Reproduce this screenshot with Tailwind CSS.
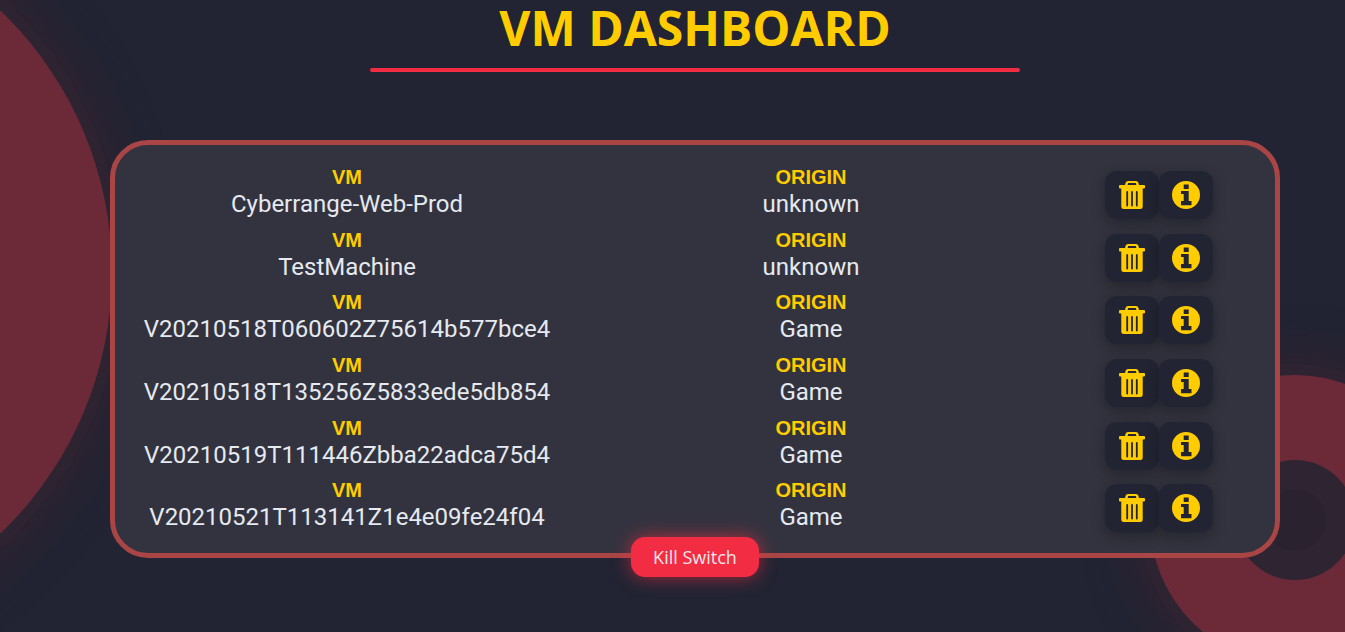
<!DOCTYPE html>
<html lang="en">
<head>
  <meta charset="UTF-8">
  <title>VM Dashboard</title>
  <script src="https://cdn.jsdelivr.net/npm/@tailwindcss/browser@4"></script>
</head>
<body class="relative h-screen overflow-hidden bg-[#222433] font-['Roboto',sans-serif]">

  <!-- icons -->
  <svg class="hidden">
    <symbol id="trash" viewBox="0 0 26 28">
      <path fill-rule="evenodd" d="M9 0h8a2.5 2.5 0 0 1 2.4 1.8L20 4h5a1 1 0 0 1 1 1v1.5a1 1 0 0 1-1 1h-1.3V25.500a2.500 2.500 0 0 1-2.500 2.500H4.800a2.500 2.500 0 0 1-2.500-2.500V7.500H1a1 1 0 0 1-1-1V5a1 1 0 0 1 1-1h5l.6-2.200A2.500 2.500 0 0 1 9 0zm.2 2l-.6 2h8.800l-.6-2zM7.300 11v13.500a.9.9 0 0 0 1.800 0V11a.9.9 0 0 0-1.800 0zm4.800 0v13.500a.9.9 0 0 0 1.800 0V11a.9.9 0 0 0-1.800 0zm4.800 0v13.500a.9.9 0 0 0 1.800 0V11a.9.9 0 0 0-1.800 0z"/>
    </symbol>
    <symbol id="info" viewBox="0 0 28 28">
      <path fill-rule="evenodd" d="M14 0a14 14 0 1 1 0 28a14 14 0 0 1 0-28zM11.700 3.500v4.500h5V3.500zM9 10v3h2.700v7H9v4.200h10.500V20h-2.800V10z"/>
    </symbol>
  </svg>

  <!-- background circles -->
  <div class="absolute left-[-612px] top-[-90px] h-[724px] w-[724px] rounded-full bg-[#6c2a38] shadow-[0_0_0_11px_#2e2431,0_0_40px_24px_#2e2230]"></div>
  <div class="absolute left-[1150px] top-[375px] flex h-[290px] w-[290px] items-center justify-center rounded-full bg-[#6c2a38] shadow-[0_0_0_11px_#2e2431,0_0_40px_24px_#2e2230]">
    <div class="flex h-[120px] w-[120px] items-center justify-center rounded-full bg-[#2e2432]">
      <div class="h-[62px] w-[62px] rounded-full bg-[#2b2230]"></div>
    </div>
  </div>

  <div class="relative flex flex-col items-center pl-[45px]">
    <h1 class="mt-[4px] font-['Open_Sans',sans-serif] text-[48px] leading-[48px] font-bold text-[#ffcc00]">VM DASHBOARD</h1>
    <div class="mt-[16px] h-[4px] w-[650px] rounded-full bg-[#f22c42]"></div>

    <div class="relative mt-[68px] w-[1170px] rounded-[38px] border-[5px] border-[#a94545] bg-[#33333f] pt-[19px] pb-[13px]">

      <div class="grid h-[62.7px] grid-cols-[2fr_2fr_1fr]">
        <div class="text-center"><p class="font-['Liberation_Sans',sans-serif] text-[20px] leading-[26px] font-bold text-[#ffcc00]">VM</p><p class="text-[24px] leading-[28px] text-[#e5e9f0]">Cyberrange-Web-Prod</p></div>
        <div class="text-center"><p class="font-['Liberation_Sans',sans-serif] text-[20px] leading-[26px] font-bold text-[#ffcc00]">ORIGIN</p><p class="text-[24px] leading-[28px] text-[#e5e9f0]">unknown</p></div>
        <div class="flex justify-center pt-[7px]">
          <button class="flex h-[48px] w-[54px] items-center justify-center rounded-[12px] bg-[#222433] shadow-[0_4px_14px_rgba(0,0,0,0.3)]"><svg class="h-[28px] w-[26px] fill-[#ffcc00]"><use href="#trash"/></svg></button>
          <button class="flex h-[48px] w-[54px] items-center justify-center rounded-[12px] bg-[#222433] shadow-[0_4px_14px_rgba(0,0,0,0.3)]"><svg class="h-[28px] w-[28px] fill-[#ffcc00]"><use href="#info"/></svg></button>
        </div>
      </div>

      <div class="grid h-[62.7px] grid-cols-[2fr_2fr_1fr]">
        <div class="text-center"><p class="font-['Liberation_Sans',sans-serif] text-[20px] leading-[26px] font-bold text-[#ffcc00]">VM</p><p class="text-[24px] leading-[28px] text-[#e5e9f0]">TestMachine</p></div>
        <div class="text-center"><p class="font-['Liberation_Sans',sans-serif] text-[20px] leading-[26px] font-bold text-[#ffcc00]">ORIGIN</p><p class="text-[24px] leading-[28px] text-[#e5e9f0]">unknown</p></div>
        <div class="flex justify-center pt-[7px]">
          <button class="flex h-[48px] w-[54px] items-center justify-center rounded-[12px] bg-[#222433] shadow-[0_4px_14px_rgba(0,0,0,0.3)]"><svg class="h-[28px] w-[26px] fill-[#ffcc00]"><use href="#trash"/></svg></button>
          <button class="flex h-[48px] w-[54px] items-center justify-center rounded-[12px] bg-[#222433] shadow-[0_4px_14px_rgba(0,0,0,0.3)]"><svg class="h-[28px] w-[28px] fill-[#ffcc00]"><use href="#info"/></svg></button>
        </div>
      </div>

      <div class="grid h-[62.7px] grid-cols-[2fr_2fr_1fr]">
        <div class="text-center"><p class="font-['Liberation_Sans',sans-serif] text-[20px] leading-[26px] font-bold text-[#ffcc00]">VM</p><p class="text-[24px] leading-[28px] text-[#e5e9f0]">V20210518T060602Z75614b577bce4</p></div>
        <div class="text-center"><p class="font-['Liberation_Sans',sans-serif] text-[20px] leading-[26px] font-bold text-[#ffcc00]">ORIGIN</p><p class="text-[24px] leading-[28px] text-[#e5e9f0]">Game</p></div>
        <div class="flex justify-center pt-[7px]">
          <button class="flex h-[48px] w-[54px] items-center justify-center rounded-[12px] bg-[#222433] shadow-[0_4px_14px_rgba(0,0,0,0.3)]"><svg class="h-[28px] w-[26px] fill-[#ffcc00]"><use href="#trash"/></svg></button>
          <button class="flex h-[48px] w-[54px] items-center justify-center rounded-[12px] bg-[#222433] shadow-[0_4px_14px_rgba(0,0,0,0.3)]"><svg class="h-[28px] w-[28px] fill-[#ffcc00]"><use href="#info"/></svg></button>
        </div>
      </div>

      <div class="grid h-[62.7px] grid-cols-[2fr_2fr_1fr]">
        <div class="text-center"><p class="font-['Liberation_Sans',sans-serif] text-[20px] leading-[26px] font-bold text-[#ffcc00]">VM</p><p class="text-[24px] leading-[28px] text-[#e5e9f0]">V20210518T135256Z5833ede5db854</p></div>
        <div class="text-center"><p class="font-['Liberation_Sans',sans-serif] text-[20px] leading-[26px] font-bold text-[#ffcc00]">ORIGIN</p><p class="text-[24px] leading-[28px] text-[#e5e9f0]">Game</p></div>
        <div class="flex justify-center pt-[7px]">
          <button class="flex h-[48px] w-[54px] items-center justify-center rounded-[12px] bg-[#222433] shadow-[0_4px_14px_rgba(0,0,0,0.3)]"><svg class="h-[28px] w-[26px] fill-[#ffcc00]"><use href="#trash"/></svg></button>
          <button class="flex h-[48px] w-[54px] items-center justify-center rounded-[12px] bg-[#222433] shadow-[0_4px_14px_rgba(0,0,0,0.3)]"><svg class="h-[28px] w-[28px] fill-[#ffcc00]"><use href="#info"/></svg></button>
        </div>
      </div>

      <div class="grid h-[62.7px] grid-cols-[2fr_2fr_1fr]">
        <div class="text-center"><p class="font-['Liberation_Sans',sans-serif] text-[20px] leading-[26px] font-bold text-[#ffcc00]">VM</p><p class="text-[24px] leading-[28px] text-[#e5e9f0]">V20210519T111446Zbba22adca75d4</p></div>
        <div class="text-center"><p class="font-['Liberation_Sans',sans-serif] text-[20px] leading-[26px] font-bold text-[#ffcc00]">ORIGIN</p><p class="text-[24px] leading-[28px] text-[#e5e9f0]">Game</p></div>
        <div class="flex justify-center pt-[7px]">
          <button class="flex h-[48px] w-[54px] items-center justify-center rounded-[12px] bg-[#222433] shadow-[0_4px_14px_rgba(0,0,0,0.3)]"><svg class="h-[28px] w-[26px] fill-[#ffcc00]"><use href="#trash"/></svg></button>
          <button class="flex h-[48px] w-[54px] items-center justify-center rounded-[12px] bg-[#222433] shadow-[0_4px_14px_rgba(0,0,0,0.3)]"><svg class="h-[28px] w-[28px] fill-[#ffcc00]"><use href="#info"/></svg></button>
        </div>
      </div>

      <div class="grid h-[62.7px] grid-cols-[2fr_2fr_1fr]">
        <div class="text-center"><p class="font-['Liberation_Sans',sans-serif] text-[20px] leading-[26px] font-bold text-[#ffcc00]">VM</p><p class="text-[24px] leading-[28px] text-[#e5e9f0]">V20210521T113141Z1e4e09fe24f04</p></div>
        <div class="text-center"><p class="font-['Liberation_Sans',sans-serif] text-[20px] leading-[26px] font-bold text-[#ffcc00]">ORIGIN</p><p class="text-[24px] leading-[28px] text-[#e5e9f0]">Game</p></div>
        <div class="flex justify-center pt-[7px]">
          <button class="flex h-[48px] w-[54px] items-center justify-center rounded-[12px] bg-[#222433] shadow-[0_4px_14px_rgba(0,0,0,0.3)]"><svg class="h-[28px] w-[26px] fill-[#ffcc00]"><use href="#trash"/></svg></button>
          <button class="flex h-[48px] w-[54px] items-center justify-center rounded-[12px] bg-[#222433] shadow-[0_4px_14px_rgba(0,0,0,0.3)]"><svg class="h-[28px] w-[28px] fill-[#ffcc00]"><use href="#info"/></svg></button>
        </div>
      </div>

      <button class="absolute bottom-[-24px] left-1/2 h-[40px] w-[128px] -translate-x-1/2 rounded-[14px] bg-[#f22c42] font-['Open_Sans',sans-serif] text-[18px] text-[#f5e6ea] shadow-[0_0_18px_rgba(242,44,66,0.65)]">Kill Switch</button>
    </div>
  </div>
</body>
</html>
